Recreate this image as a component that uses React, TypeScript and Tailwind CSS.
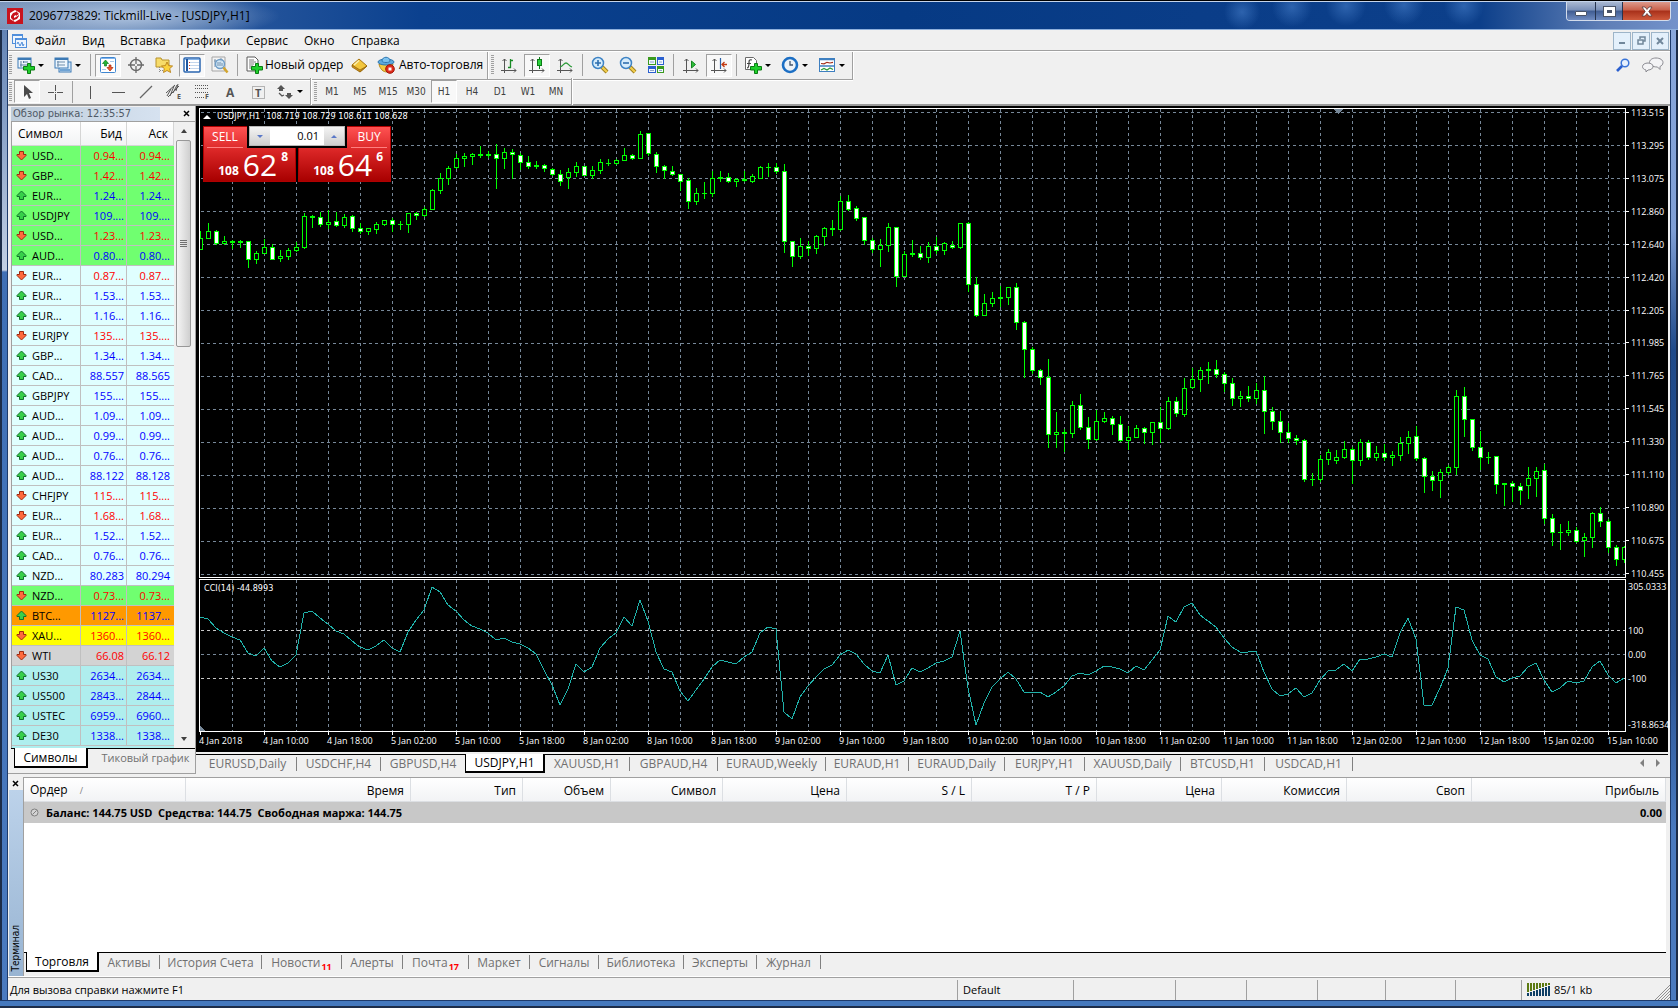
import type { ReactNode } from "react";

/* ---------- data ---------- */

type Quote = [string, string, string, "up" | "down", "green" | "cyan" | "orange" | "yellow" | "gray" | "teal"];

const quotes: Quote[] = [
  ["USD...", "0.94...", "0.94...", "down", "green"],
  ["GBP...", "1.42...", "1.42...", "down", "green"],
  ["EUR...", "1.24...", "1.24...", "up", "green"],
  ["USDJPY", "109....", "109....", "up", "green"],
  ["USD...", "1.23...", "1.23...", "down", "green"],
  ["AUD...", "0.80...", "0.80...", "up", "green"],
  ["EUR...", "0.87...", "0.87...", "down", "cyan"],
  ["EUR...", "1.53...", "1.53...", "up", "cyan"],
  ["EUR...", "1.16...", "1.16...", "up", "cyan"],
  ["EURJPY", "135....", "135....", "down", "cyan"],
  ["GBP...", "1.34...", "1.34...", "up", "cyan"],
  ["CAD...", "88.557", "88.565", "up", "cyan"],
  ["GBPJPY", "155....", "155....", "up", "cyan"],
  ["AUD...", "1.09...", "1.09...", "up", "cyan"],
  ["AUD...", "0.99...", "0.99...", "up", "cyan"],
  ["AUD...", "0.76...", "0.76...", "up", "cyan"],
  ["AUD...", "88.122", "88.128", "up", "cyan"],
  ["CHFJPY", "115....", "115....", "down", "cyan"],
  ["EUR...", "1.68...", "1.68...", "down", "cyan"],
  ["EUR...", "1.52...", "1.52...", "up", "cyan"],
  ["CAD...", "0.76...", "0.76...", "up", "cyan"],
  ["NZD...", "80.283", "80.294", "up", "cyan"],
  ["NZD...", "0.73...", "0.73...", "down", "green"],
  ["BTC...", "1127...", "1137...", "up", "orange"],
  ["XAU...", "1360...", "1360...", "down", "yellow"],
  ["WTI", "66.08", "66.12", "down", "gray"],
  ["US30", "2634...", "2634...", "up", "teal"],
  ["US500", "2843...", "2844...", "up", "teal"],
  ["USTEC", "6959...", "6960...", "up", "teal"],
  ["DE30", "1338...", "1338...", "up", "teal"],
];

const rowColor = {
  green: "bg-[#70ff70]",
  cyan: "bg-[#e0ffff]",
  orange: "bg-[#ff9900]",
  yellow: "bg-[#ffff00]",
  gray: "bg-[#d3d3d3]",
  teal: "bg-[#afeeee]",
};

/* Candles: high, body top, body bottom, low (three units per pixel), kind: w filled, h hollow, d doji. */
const candleRuns: { base: number; rows: string }[] = [
  {
    base: -27,
    rows: `393 414 450 450 h;369 393 417 417 h;390 393 432 435 w;408 423 432 435 h;420 423 429 447 d;420 423 429 444 d;423 423 480 504 w;453 459 480 492 h;417 441 462 462 h;432 441 480 480 w;450 468 477 486 h;444 450 471 480 h;426 441 453 456 h;339 348 444 447 h;345 348 354 384 d;336 351 375 381 w;330 366 375 387 h;336 363 378 381 w;342 351 378 384 h;345 348 387 396 w;369 384 396 402 w;384 384 396 405 h;366 372 390 402 h;360 360 375 378 h;354 360 375 396 w;363 372 375 390 d;339 339 375 399 h;336 339 348 360 w;321 327 348 351 h;267 270 330 330 h;219 234 273 282 h;198 204 237 255 h;162 174 204 207 h;159 168 177 201 h;159 162 171 195 h;138 162 168 174 d;153 162 168 174 d;132 162 177 267 w;144 156 177 207 h;147 156 165 237 w;159 165 189 210 w;168 186 201 207 w;183 195 201 207 d;192 195 207 216 w;204 207 225 228 w;210 222 246 258 w;204 216 234 267 h;186 198 219 231 h;198 198 228 228 w;198 210 228 237 h;177 186 213 222 h;177 189 192 198 d;177 180 192 195 h;144 165 183 183 h;162 165 177 180 w;93 102 177 177 h;99 99 162 168 w;156 162 201 219 w;195 198 213 237 w;198 213 225 228 w;222 222 246 273 w;234 240 306 327 w;264 279 306 315 h;246 279 282 297 d`,
  },
  {
    base: 33,
    rows: `153 174 222 231 h;153 171 177 186 d;159 171 186 189 w;174 177 186 201 h;153 177 183 186 d;162 168 186 189 h;138 141 177 177 h;129 141 144 171 d;129 141 156 162 w;132 153 366 399 w;363 363 411 441 w;354 378 411 417 h;363 378 387 408 w;345 348 387 402 h;321 324 351 378 h;300 324 330 348 d;228 243 330 333 h;225 243 270 273 w;258 264 297 303 w;291 291 363 375 w;354 360 390 399 w;357 375 390 441 h;309 321 378 396 h;321 321 471 501 w;393 402 471 471 h;360 399 405 411 d;378 399 414 420 w;366 378 414 429 h;351 378 393 402 w;366 369 393 405 h;363 375 384 387 w;309 309 384 387 h;306 309 495 516 w;471 492 588 591 w;522 549 588 588 h;516 534 552 561 h;498 531 537 561 d;501 501 534 555 h;489 501 609 630 w;603 606 690 774 w;681 687 753 762 w;747 750 774 795 w;717 771 945 984 w;876 936 945 984 h;927 936 942 996 d;843 855 942 954 h;822 855 924 930 w;891 921 960 987 w;870 903 960 963 h;876 894 906 909 h;888 894 915 945 w;888 912 963 966 w;918 951 963 990 h;915 924 954 954 h;921 924 939 972 w;906 906 939 975 h;861 906 927 969 w;831 843 927 930 h;831 843 882 891 w;774 804 885 891 h;744 777 804 807 h`,
  },
  {
    base: 693,
    rows: `81 90 120 156 h;66 87 93 132 d;60 87 105 114 w;96 102 132 156 w;114 129 177 198 w;153 168 177 201 h;138 168 177 186 w;129 150 177 192 h;108 150 216 282 w;201 213 246 270 w;213 243 279 309 w;249 276 297 309 w;285 294 303 315 w;297 300 420 426 w;399 417 420 438 d;345 357 420 426 h;327 336 360 375 h;330 351 363 372 h;303 327 354 357 h;321 327 363 432 w;297 306 363 378 h;300 306 354 360 w;318 339 354 363 h;312 339 354 363 w;333 345 354 378 h;291 309 348 363 h;273 291 312 342 h;258 288 357 363 w;351 354 411 459 w;393 408 423 453 w;387 396 423 474 h;375 381 399 405 h;150 168 384 405 h;141 168 240 291 w;237 237 324 333 w;273 321 354 390 w;336 351 354 372 d;348 348 435 462 w;429 429 435 498 d;423 429 441 486 w;429 438 453 495 w;381 414 438 477 h;381 393 417 471 h;372 390 537 552 w;522 534 579 618 w;552 576 579 630 d;543 570 579 588 h;561 570 606 609 w;579 591 603 651 h;516 519 594 624 h;501 519 546 561 w;537 543 624 639 w;615 621 660 678 w;618 621 660 669 h`,
  },
];

const candles = candleRuns.flatMap((run) =>
  run.rows.split(";").map((r) => {
    const [h, t, b, l, kind] = r.split(" ");
    const px = (v: string) => Math.round((Number(v) + run.base) / 3);
    return { high: px(h), top: px(t), bottom: px(b), low: px(l), kind };
  }),
);

const cci = [
  142, 147, 175, 188, 201, 209, 249, 259, 233, 272, 291, 279, 254, 130, 124, 145, 163, 183, 192, 214, 231, 241, 229, 211,
  234, 246, 187, 150, 120, 52, 67, 105, 122, 150, 167, 176, 189, 211, 203, 216, 223, 234, 251, 300, 345, 405, 358, 283,
  306, 292, 233, 208, 189, 140, 169, 91, 153, 245, 296, 307, 362, 394, 360, 327, 290, 271, 277, 281, 262, 247, 188, 171,
  178, 427, 448, 380, 347, 320, 296, 284, 254, 240, 253, 283, 303, 310, 256, 346, 333, 295, 306, 293, 278, 274, 261, 183,
  353, 464, 400, 350, 327, 306, 328, 367, 367, 367, 382, 365, 349, 317, 309, 316, 302, 289, 292, 298, 309, 289, 301, 270,
  240, 139, 156, 110, 99, 135, 152, 170, 203, 232, 247, 247, 243, 306, 358, 379, 373, 355, 380, 369, 331, 304, 300, 283,
  304, 268, 268, 262, 253, 262, 190, 145, 208, 406, 406, 354, 295, 111, 121, 210, 254, 267, 321, 337, 324, 318, 291, 280,
  330, 367, 354, 334, 340, 333, 292, 274, 315, 340, 325,
];
const cciPoints = cci.map((v, i) => `${i * 8},${Math.round(v / 3) - 10}`).join(" ");

const prices = [
  "113.515", "113.295", "113.075", "112.860", "112.640", "112.420", "112.205", "111.985", "111.765", "111.545",
  "111.330", "111.110", "110.890", "110.675", "110.455",
];

const dates = [
  "4 Jan 2018", "4 Jan 10:00", "4 Jan 18:00", "5 Jan 02:00", "5 Jan 10:00", "5 Jan 18:00", "8 Jan 02:00", "8 Jan 10:00",
  "8 Jan 18:00", "9 Jan 02:00", "9 Jan 10:00", "9 Jan 18:00", "10 Jan 02:00", "10 Jan 10:00", "10 Jan 18:00",
  "11 Jan 02:00", "11 Jan 10:00", "11 Jan 18:00", "12 Jan 02:00", "12 Jan 10:00", "12 Jan 18:00", "15 Jan 02:00",
  "15 Jan 10:00",
];

const chartTabs: [string, string][] = [
  ["EURUSD,Daily", "w-[98px]"],
  ["USDCHF,H4", "w-[84px]"],
  ["GBPUSD,H4", "w-[84px]"],
  ["USDJPY,H1", "w-[80px]"],
  ["XAUUSD,H1", "w-[85px]"],
  ["GBPAUD,H4", "w-[88px]"],
  ["EURAUD,Weekly", "w-[108px]"],
  ["EURAUD,H1", "w-[83px]"],
  ["EURAUD,Daily", "w-[96px]"],
  ["EURJPY,H1", "w-[80px]"],
  ["XAUUSD,Daily", "w-[96px]"],
  ["BTCUSD,H1", "w-[84px]"],
  ["USDCAD,H1", "w-[88px]"],
];

const terminalTabs: [string, string, string?][] = [
  ["Торговля", "w-[73px]"],
  ["Активы", "w-[61px]"],
  ["История Счета", "w-[102px]"],
  ["Новости", "w-[80px]", "11"],
  ["Алерты", "w-[61px]"],
  ["Почта", "w-[66px]", "17"],
  ["Маркет", "w-[61px]"],
  ["Сигналы", "w-[69px]"],
  ["Библиотека", "w-[85px]"],
  ["Эксперты", "w-[73px]"],
  ["Журнал", "w-[64px]"],
];

const terminalColumns: [string, string][] = [
  ["Ордер", "w-[162px]"],
  ["Время", "w-[225px]"],
  ["Тип", "w-[112px]"],
  ["Объем", "w-[88px]"],
  ["Символ", "w-[112px]"],
  ["Цена", "w-[124px]"],
  ["S / L", "w-[125px]"],
  ["T / P", "w-[125px]"],
  ["Цена", "w-[125px]"],
  ["Комиссия", "w-[125px]"],
  ["Своп", "w-[125px]"],
  ["Прибыль", "w-auto"],
];

/* ---------- icons ---------- */

function Icon({ children, size = 18 }: { children: ReactNode; size?: number }) {
  return (
    <svg width={size} height={size} viewBox="0 0 18 18" fill="none" className="shrink-0" aria-hidden="true">
      {children}
    </svg>
  );
}

const Plus = () => (
  <path d="M10.500 7.500h3v3h4v3.500h-4v3.500h-3V14h-4v-3.500h4z" fill="#1fd02c" stroke="#0a7d12" strokeWidth="1" />
);

const NewChartIcon = () => (
  <Icon>
    <rect x="1" y="2" width="13" height="10" fill="#eef6fd" stroke="#3d7ab5" />
    <path d="M1 3h13" stroke="#3d7ab5" strokeWidth="2" />
    <path d="M4 5v6M3 9h7M7 6h4M6 5l1 1-1 1" stroke="#5b7e9f" />
    <Plus />
  </Icon>
);
const ProfilesIcon = () => (
  <Icon>
    <rect x="5" y="6" width="12" height="10" fill="#d9eafa" stroke="#3d7ab5" />
    <path d="M6 14h10" stroke="#6fa3d4" strokeWidth="2" />
    <rect x="1" y="2" width="13" height="10" fill="#eef6fd" stroke="#3d7ab5" />
    <path d="M1 3h13" stroke="#3d7ab5" strokeWidth="2" />
    <path d="M4 5v6M3 6h8M3 9h8" stroke="#6e8dab" />
  </Icon>
);
const MarketWatchIcon = () => (
  <Icon>
    <rect x="1.500" y="1.500" width="15" height="15" rx="1" fill="#fff" stroke="#3f86d0" />
    <path d="M2 2.500h14" stroke="#7fb2ea" />
    <path d="M6.500 4l3 3.500h-2V10h-2V7.500h-2z" fill="#22b534" stroke="#0b7d1b" strokeWidth=".7" />
    <path d="M11 15l3-3.500h-2V9h-2v2.500H8z" fill="#f0562c" stroke="#a82a08" strokeWidth=".7" />
    <path d="M11 5.500h4M3 13.500h4" stroke="#a9c8e8" />
  </Icon>
);
const TargetIcon = () => (
  <Icon>
    <circle cx="9" cy="9" r="5.500" stroke="#6a6a6a" strokeWidth="1.400" />
    <path d="M9 1v7M9 10v7M1 9h7M10 9h7" stroke="#6a6a6a" strokeWidth="1.300" />
  </Icon>
);
const FolderStarIcon = () => (
  <Icon>
    <path d="M1 2h5l1 2h7v7H1z" fill="#f7dc6a" stroke="#b8922a" />
    <path d="M4.500 11v5M5 14.500h4" stroke="#8b8b8b" strokeDasharray="1 1" />
    <path d="M12 6l1.700 3.600 3.900.4-2.900 2.600.9 3.900-3.600-2-3.500 2 .8-3.900L6.500 10l3.900-.4z" fill="#fbd23c" stroke="#b8801a" strokeWidth=".9" />
  </Icon>
);
const TerminalIcon = () => (
  <Icon>
    <rect x="1" y="2" width="16" height="14" rx="1" fill="#fff" stroke="#2a66b0" strokeWidth="1.500" />
    <path d="M2 3.500h14" stroke="#7fb2ea" />
    <path d="M4 3v12" stroke="#1e56a0" strokeWidth="2" />
    <path d="M7 6.500h9M7 9.500h9M7 12.500h9" stroke="#c3d6ec" />
    <path d="M6 6.500h1M6 9.500h1M6 12.500h1" stroke="#d0402b" />
  </Icon>
);
const TesterIcon = () => (
  <Icon>
    <path d="M1 1h13v14H1z" fill="#f4f4f4" stroke="#a5a5a5" />
    <path d="M4 3v8M3 5h3M10 2v5M9 4h3" stroke="#7a93ab" />
    <circle cx="9" cy="8" r="4.500" fill="#cfe6f7" fillOpacity=".85" stroke="#6f9dc7" strokeWidth="1.400" />
    <path d="M7 6v4M9 6v4M11 7v3" stroke="#6e8dab" />
    <path d="M12.500 11.500l4 5" stroke="#d2a530" strokeWidth="2.600" />
  </Icon>
);
const NewOrderIcon = () => (
  <Icon>
    <path d="M2 1h8l3 3v11H2z" fill="#fff" stroke="#5a5a5a" />
    <path d="M4 4h5M4 6h7M4 8h5M4 10h4M4 12h2" stroke="#7d7d7d" />
    <Plus />
  </Icon>
);
const BookIcon = () => (
  <Icon>
    <path d="M2 9l7-6 8 7-7 6z" fill="#f2c63d" stroke="#a87510" />
    <path d="M2 9l8 5 7-4-7 6-8-5z" fill="#c98f1c" stroke="#8f610c" strokeWidth=".7" />
    <path d="M4 9l5-4.500" stroke="#fdf0b0" strokeWidth="1.500" />
  </Icon>
);
const AutoTradeIcon = () => (
  <Icon>
    <path d="M2 8c1 5 4 8 8 8 3 0 5-3 6-8z" fill="#f3ca3e" stroke="#b88a1b" />
    <ellipse cx="9" cy="6" rx="8" ry="3" fill="#5ea9dc" stroke="#2f77b0" />
    <path d="M5 5c0-5 8-5 8 0 0 2-8 2-8 0z" fill="#7cc2ee" stroke="#2f77b0" />
    <circle cx="13" cy="13" r="4.300" fill="#e02d1b" stroke="#9f1408" />
    <rect x="11.500" y="11.500" width="3" height="3" fill="#fff" />
  </Icon>
);
const Axes = () => (
  <path d="M4.500 3v14M1 14.500h15M2.500 5l2-2 2 2M14 12.500l2 2-2 2" stroke="#555" />
);
const BarsIcon = () => (
  <Icon>
    <Axes />
    <path d="M10.500 3v9M10 4.500h3M8 11.500h3" stroke="#188a24" strokeWidth="1.300" />
  </Icon>
);
const CandlesIcon = () => (
  <Icon>
    <Axes />
    <path d="M11.500 1v12" stroke="#0c7a17" />
    <rect x="9.500" y="3.500" width="4" height="6" fill="#2bd13b" stroke="#0c7a17" />
  </Icon>
);
const LineIcon = () => (
  <Icon>
    <Axes />
    <path d="M4 11c3-1 4-4 6-4s3 3 6 4" stroke="#2d9b39" strokeWidth="1.300" />
  </Icon>
);
const ZoomIcon = ({ plus }: { plus: boolean }) => (
  <Icon>
    <path d="M11 11l5 5" stroke="#9a7a1a" strokeWidth="4" />
    <path d="M11 11l5 5" stroke="#f0cc4c" strokeWidth="2.400" />
    <circle cx="7" cy="7" r="5.500" fill="#d6ecfb" stroke="#3e83c4" strokeWidth="1.500" />
    <path d={plus ? "M4 7h6M7 4v6" : "M4 7h6"} stroke="#2f6fae" strokeWidth="1.600" />
  </Icon>
);
const TilesIcon = () => (
  <Icon>
    <path d="M1 1h8v8H1zM10 10h7v7h-7z" fill="#3a9a1e" />
    <path d="M10 1h7v8h-7zM1 10h8v7H1z" fill="#2a5fcf" />
    <path d="M2 4h6v4H2zM11 4h5v4h-5zM2 13h6v3H2zM11 13h5v3h-5z" fill="#f4f8ff" />
    <path d="M3 6h4M12 6h3M3 14.500h4M12 14.500h3" stroke="#8fa6c8" />
  </Icon>
);
const AutoScrollIcon = () => (
  <Icon>
    <Axes />
    <path d="M9.500 5l4 3.500-4 3.500z" fill="#2fbf3c" stroke="#148520" />
  </Icon>
);
const ShiftIcon = () => (
  <Icon>
    <Axes />
    <path d="M10.500 2v11" stroke="#2b62a8" strokeWidth="1.200" />
    <path d="M17 8.500h-5M14.500 6l-2.500 2.500 2.500 2.500" stroke="#c23a12" strokeWidth="1.300" />
  </Icon>
);
const IndicatorIcon = () => (
  <Icon>
    <path d="M1.500 1.500h8l3 3v9h-11z" fill="#fff" stroke="#6a6a6a" />
    <path d="M8 4c-3-1-3 1-3 3s0 5-2 5M3 7.500h4" stroke="#444" strokeWidth="1.200" />
    <Plus />
  </Icon>
);
const ClockIcon = () => (
  <Icon>
    <circle cx="9" cy="9" r="7" fill="#eef3f8" stroke="#1c6fc4" strokeWidth="2.600" />
    <path d="M9 5v4h3" stroke="#45566b" strokeWidth="1.300" />
  </Icon>
);
const TemplateIcon = () => (
  <Icon>
    <rect x="1.500" y="2.500" width="15" height="13" fill="#fff" stroke="#3e7fc0" />
    <path d="M1 3.500h16M1 10h16" stroke="#3e7fc0" strokeWidth="1.500" />
    <path d="M3 7.500l3 .3 3-1.500 3 .7 3-.7" stroke="#a3301c" strokeWidth="1.200" />
    <path d="M3 14l3-1.500 3 1.500 3-2 3 1.500" stroke="#2d9b39" strokeWidth="1.200" />
  </Icon>
);
const CursorIcon = () => (
  <Icon>
    <path d="M6 2v12l3-3 2 5 2-1-2-5h4z" fill="#4a4a4a" />
  </Icon>
);
const CrossIcon = () => (
  <Icon>
    <path d="M9.500 2v6M9.500 11v6M2 9.500h6M11 9.500h6M9 9.500h1" stroke="#555" />
  </Icon>
);
const VLineIcon = () => (
  <Icon>
    <path d="M9.500 3v13" stroke="#555" />
  </Icon>
);
const HLineIcon = () => (
  <Icon>
    <path d="M3 9.500h13" stroke="#555" />
  </Icon>
);
const TrendIcon = () => (
  <Icon>
    <path d="M3 15L15 3" stroke="#666" strokeWidth="1.200" />
  </Icon>
);
const ChannelIcon = () => (
  <Icon>
    <path d="M1 10L10 2M3 14L14 3M2 13l4-7M5 13l4-10M8 10l4-8M11 8l2-7" stroke="#555" />
    <text x="12" y="16" fontSize="7" fontWeight="700" fill="#555" fontFamily="Open Sans, sans-serif">E</text>
  </Icon>
);
const FiboIcon = () => (
  <Icon>
    <path d="M2 2.500h14M2 5.500h14M2 9.500h14M2 14.500h9" stroke="#555" strokeDasharray="1 1" />
    <text x="12" y="16" fontSize="7" fontWeight="700" fill="#555" fontFamily="Open Sans, sans-serif">F</text>
  </Icon>
);
const TextIcon = () => (
  <Icon>
    <text x="5" y="14" fontSize="12" fontWeight="700" fill="#555" fontFamily="Open Sans, sans-serif">A</text>
  </Icon>
);
const LabelIcon = () => (
  <Icon>
    <rect x="3.500" y="3.500" width="12" height="12" stroke="#777" strokeDasharray="1 1" />
    <text x="6" y="14" fontSize="11" fontWeight="700" fill="#555" fontFamily="Open Sans, sans-serif">T</text>
  </Icon>
);
const ShapesIcon = () => (
  <Icon>
    <path d="M5 2l4 4H7v2H3V6H1zM13 16l-4-4h2v-2h4v2h2z" fill="#555" />
    <path d="M3 10l3 3 2-1" stroke="#555" strokeWidth="1.300" />
  </Icon>
);
const ArrowMark = ({ dir }: { dir: "up" | "down" }) => (
  <svg width="11" height="11" viewBox="0 0 11 11" aria-hidden="true" className="shrink-0">
    {dir === "up" ? (
      <path d="M5.500 1L10 5.500v1H7.500v3h-4v-3H1v-1z" fill="#37cf4a" stroke="#11702a" />
    ) : (
      <path d="M5.500 10L1 5.500v-1h2.500v-3h4v3H10v1z" fill="#ff6a3c" stroke="#9c2a10" />
    )}
  </svg>
);

/* ---------- toolbar pieces ---------- */

function Grip() {
  return (
    <span className="flex h-5 w-[5px] shrink-0 justify-center">
      <span className="w-[3px] bg-[repeating-linear-gradient(to_bottom,#a0a0a0_0,#a0a0a0_1px,#f0f0f0_1px,#f0f0f0_2px)]" />
    </span>
  );
}

function Sep() {
  return (
    <span className="flex h-[22px] w-[7px] shrink-0 justify-center">
      <span className="w-px bg-[#a0a0a0]" />
    </span>
  );
}

function Tool({ label, pressed, children }: { label: string; pressed?: boolean; children: ReactNode }) {
  return (
    <button type="button" aria-label={label} className="flex w-7 shrink-0 items-center justify-center">
      <span
        className={
          pressed
            ? "flex h-[23px] w-[26px] items-center justify-center border border-b-white border-r-white border-l-[#a0a0a0] border-t-[#a0a0a0] bg-[#f8f8f8]"
            : "flex h-[23px] w-[26px] items-center justify-center"
        }
      >
        {children}
      </span>
    </button>
  );
}

function DropTool({ label, children }: { label: string; children: ReactNode }) {
  return (
    <button type="button" aria-label={label} className="flex w-[37px] shrink-0 items-center gap-[3px] pl-1">
      {children}
      <span className="border-x-[3px] border-t-[3px] border-x-transparent border-t-black" />
    </button>
  );
}

function TitleBar() {
  return (
    <header className="flex h-[29px] shrink-0 items-start justify-between border-b border-t border-b-[#8fb0dc] border-t-[#c5d4ea] bg-[radial-gradient(ellipse_150px_24px_at_130px_14px,rgba(190,208,232,0.85),transparent),radial-gradient(circle_at_1242px_10px,rgba(60,115,190,0.7)_0,transparent_18px),radial-gradient(circle_at_1292px_5px,rgba(60,115,190,0.7)_0,transparent_20px),radial-gradient(circle_at_1346px_4px,rgba(60,115,190,0.7)_0,transparent_20px),radial-gradient(circle_at_1404px_3px,rgba(60,115,190,0.7)_0,transparent_20px),radial-gradient(circle_at_1464px_4px,rgba(60,115,190,0.7)_0,transparent_20px),linear-gradient(to_right,#7a94ba_0,#6283b2_120px,#23539a_260px,#0b418f_420px,#063a84_900px,#0a3d88_1200px,#0c3f8a_1480px,#5d7db5_1600px,#7493cb_100%)] px-[7px]">
      <div className="flex h-7 items-center gap-[6px]">
        <svg width="16" height="16" viewBox="0 0 16 16" aria-hidden="true">
          <rect width="16" height="16" fill="#c8141e" />
          <path d="M3 5l5-3 5 3v6l-5 3-5-3z" fill="#fff" />
          <path d="M4 8l2-3 3-1 0-1 3 3-3 2 0-1-2 1v2l2-1 3-2v1l-2 3-3 1v1l-3-3z" fill="#c8141e" />
        </svg>
        <h1 className="text-[12px] leading-4 text-black">2096773829: Tickmill-Live - [USDJPY,H1]</h1>
      </div>
      <div className="flex h-[19px] overflow-hidden rounded-b-[4px] border border-t-0 border-[#d3dceb]">
        <button type="button" aria-label="Свернуть" className="flex w-[29px] items-center justify-center border-r border-[#26344f] bg-[linear-gradient(to_bottom,#a9b8d2,#7a90b8_45%,#3f5c92_50%,#6f8bc0)]">
          <span className="mt-1 h-[5px] w-3 rounded-[1px] border border-[#4a5468] bg-white" />
        </button>
        <button type="button" aria-label="Развернуть" className="flex w-[27px] items-center justify-center border-r border-[#26344f] bg-[linear-gradient(to_bottom,#a9b8d2,#7a90b8_45%,#3f5c92_50%,#6f8bc0)]">
          <span className="h-[9px] w-[11px] border-[3px] border-white bg-[#4a5468] outline outline-1 outline-[#4a5468]" />
        </button>
        <button type="button" aria-label="Закрыть" className="flex w-[47px] items-center justify-center bg-[linear-gradient(to_bottom,#dd9a8c,#c9604a_45%,#a8301a_50%,#cf5a3c)]">
          <svg width="12" height="11" viewBox="0 0 12 11">
            <path d="M1 1l3 0 2 2.500L8 1h3L7.800 5.500 11 10H8L6 7.500 4 10H1l3.200-4.500z" fill="#fff" stroke="#5b3b3b" strokeWidth=".8" />
          </svg>
        </button>
      </div>
    </header>
  );
}

function MenuBar() {
  const mdi = "flex h-[18px] w-[18px] items-center justify-center border border-[#9db4c8] bg-[#e4f0fb]";
  return (
    <nav className="flex h-[22px] shrink-0 items-center justify-between border-b border-white pr-[1px] shadow-[inset_0_-1px_0_#a0a0a0]">
      <div className="flex items-center pl-1 text-[12px] leading-4">
        <svg width="16" height="16" viewBox="0 0 16 16" fill="none" aria-hidden="true" className="mr-[7px]">
          <rect x="0.500" y="1.500" width="10" height="9" fill="#eef5fd" stroke="#4f8edb" />
          <rect x="3.500" y="5.500" width="11" height="9" fill="#eef5fd" stroke="#4f8edb" />
          <path d="M3 6h12M0 2h11" stroke="#4f8edb" strokeWidth="2" />
          <path d="M5 11l1-2 2 4 2-4 1 4 1-2" stroke="#4f8edb" />
        </svg>
        <a href="#file" className="w-[47px]">Файл</a>
        <a href="#view" className="w-[38px]">Вид</a>
        <a href="#insert" className="w-[60px]">Вставка</a>
        <a href="#charts" className="w-[66px]">Графики</a>
        <a href="#tools" className="w-[58px]">Сервис</a>
        <a href="#window" className="w-[47px]">Окно</a>
        <a href="#help">Справка</a>
      </div>
      <div className="flex gap-px">
        <button type="button" aria-label="Свернуть график" className={mdi}>
          <span className="mt-1 h-[2px] w-[6px] bg-[#71879b]" />
        </button>
        <button type="button" aria-label="Восстановить график" className={mdi}>
          <svg width="9" height="9" viewBox="0 0 9 9" fill="none">
            <path d="M3 3V1h5v4H6" stroke="#71879b" strokeWidth="1.500" />
            <path d="M1 4h5v4H1z" stroke="#71879b" strokeWidth="1.500" />
          </svg>
        </button>
        <button type="button" aria-label="Закрыть график" className={mdi}>
          <svg width="8" height="8" viewBox="0 0 8 8">
            <path d="M1 1l6 6M7 1L1 7" stroke="#71879b" strokeWidth="2" />
          </svg>
        </button>
      </div>
    </nav>
  );
}

const groupEdge = "flex h-[27px] items-center border-r border-[#a0a0a0] pr-px shadow-[1px_0_0_#fff]";

function Toolbars() {
  return (
    <>
      <div className="flex h-[27px] shrink-0 items-center justify-between">
        <div className="flex border-b border-[#a0a0a0] shadow-[0_1px_0_#fff]">
          <div className={groupEdge}>
            <Grip />
            <DropTool label="Новый график"><NewChartIcon /></DropTool>
            <DropTool label="Профили"><ProfilesIcon /></DropTool>
            <Sep />
            <Tool label="Обзор рынка" pressed><MarketWatchIcon /></Tool>
            <Tool label="Окно данных"><TargetIcon /></Tool>
            <Tool label="Навигатор"><FolderStarIcon /></Tool>
            <Tool label="Терминал" pressed><TerminalIcon /></Tool>
            <Tool label="Тестер стратегий"><TesterIcon /></Tool>
            <Sep />
            <button type="button" className="flex w-[104px] items-center gap-[2px] pl-1 text-[12px] leading-4">
              <NewOrderIcon />
              <span className="whitespace-nowrap">Новый ордер</span>
            </button>
            <Tool label="MetaEditor"><BookIcon /></Tool>
            <button type="button" className="flex w-[113px] items-center gap-[4px] pl-1 text-[12px] leading-4">
              <AutoTradeIcon />
              <span className="whitespace-nowrap">Авто-торговля</span>
            </button>
          </div>
          <div className={`${groupEdge} pl-[2px]`}>
            <Grip />
            <Tool label="Бары"><BarsIcon /></Tool>
            <Tool label="Свечи" pressed><CandlesIcon /></Tool>
            <Tool label="Линия"><LineIcon /></Tool>
            <Sep />
            <Tool label="Увеличить"><ZoomIcon plus /></Tool>
            <Tool label="Уменьшить"><ZoomIcon plus={false} /></Tool>
            <Tool label="Окна рядом"><TilesIcon /></Tool>
            <Sep />
            <Tool label="Автопрокрутка"><AutoScrollIcon /></Tool>
            <Tool label="Сдвиг графика" pressed><ShiftIcon /></Tool>
            <Sep />
            <DropTool label="Индикаторы"><IndicatorIcon /></DropTool>
            <DropTool label="Периоды"><ClockIcon /></DropTool>
            <DropTool label="Шаблоны"><TemplateIcon /></DropTool>
          </div>
        </div>
        <div className="flex items-center gap-3 pb-[2px] pr-[6px]">
          <button type="button" aria-label="Поиск">
            <svg width="14" height="14" viewBox="0 0 14 14" fill="none">
              <circle cx="9" cy="5" r="3.800" fill="#e6f0fd" stroke="#3a74d8" strokeWidth="1.500" />
              <path d="M6 8l-5 5" stroke="#2a5fcf" strokeWidth="2.600" />
            </svg>
          </button>
          <button type="button" aria-label="Чат">
            <svg width="22" height="16" viewBox="0 0 22 16" fill="none">
              <path d="M14 1c4 0 7 2 7 4.500S19 9 18 9.500l0 3-2.500-2.500c-5 0-8-2-8-4.500S10 1 14 1z" fill="#f4f4f6" stroke="#8a8a90" />
              <path d="M6 6c3 0 5 1.500 5 3.500s-2 3.500-5 3.500l-2 2v-2c-2-.5-3.500-1.500-3.500-3.500S3 6 6 6z" fill="#f4f4f6" stroke="#8a8a90" />
            </svg>
          </button>
        </div>
      </div>
      <div className="flex h-[27px] shrink-0 items-center border-b-2 border-[#9a9a9a]">
        <div className={groupEdge}>
          <Grip />
          <Tool label="Курсор" pressed><CursorIcon /></Tool>
          <Tool label="Перекрестие"><CrossIcon /></Tool>
          <Sep />
          <Tool label="Вертикальная линия"><VLineIcon /></Tool>
          <Tool label="Горизонтальная линия"><HLineIcon /></Tool>
          <Tool label="Трендовая линия"><TrendIcon /></Tool>
          <Tool label="Канал"><ChannelIcon /></Tool>
          <Tool label="Фибоначчи"><FiboIcon /></Tool>
          <Tool label="Текст"><TextIcon /></Tool>
          <Tool label="Метка"><LabelIcon /></Tool>
          <DropTool label="Стрелки"><ShapesIcon /></DropTool>
        </div>
        <div className={`${groupEdge} pl-[2px]`}>
          <Grip />
          {["M1", "M5", "M15", "M30", "H1", "H4", "D1", "W1", "MN"].map((p) => (
            <Tool key={p} label={p} pressed={p === "H1"}>
              <span className="font-['DejaVu_Sans_Condensed','DejaVu_Sans',sans-serif] text-[10px] leading-4 text-[#404040]">{p}</span>
            </Tool>
          ))}
        </div>
      </div>
    </>
  );
}

/* ---------- market watch ---------- */

function MarketWatch() {
  const th = "h-6 border-b border-r border-[#d5d5d5] bg-gradient-to-b from-white to-[#f2f3f5] pl-[6px] font-normal";
  return (
    <aside className="flex w-[188px] shrink-0 flex-col border-b border-r border-[#a0a0a0] pl-[3px]">
      <div className="flex h-[15px] items-center justify-between pr-[5px]">
        <span className="w-[149px] bg-gradient-to-r from-[#bfcddb] to-[#d6e2f0] pl-[2px] font-['DejaVu_Sans_Condensed','DejaVu_Sans',sans-serif] text-[11px] leading-[14px] text-[#505a66]">
          Обзор рынка: 12:35:57
        </span>
        <button type="button" aria-label="Закрыть обзор рынка">
          <svg width="7" height="7" viewBox="0 0 7 7"><path d="M1 1l5 5M6 1L1 6" stroke="#000" strokeWidth="1.500" /></svg>
        </button>
      </div>
      <div className="flex h-[627px] overflow-hidden border-l border-t border-[#a0a0a0] bg-white">
        <div className="w-[162px] shrink-0">
          <table className="w-full table-fixed border-separate border-spacing-0 text-[11px] leading-4">
            <thead>
              <tr className="text-[12px]">
                <th className={`${th} w-[69px] text-left`}>Символ</th>
                <th className={`${th} w-[46px] pr-1 text-right`}>Бид</th>
                <th className={`${th} pr-[5px] text-right`}>Аск</th>
              </tr>
            </thead>
            <tbody>
              {quotes.map(([name, bid, ask, dir, color], i) => {
                const num = dir === "up" ? "text-[#0000ff]" : "text-[#ff0000]";
                return (
                  <tr key={i} className={rowColor[color]}>
                    <td className="h-5 border-b border-r border-[#c0c0c0] p-0 pl-1">
                      <span className="flex items-center gap-[5px]">
                        <ArrowMark dir={dir} />
                        <span>{name}</span>
                      </span>
                    </td>
                    <td className={`h-5 border-b border-r border-[#c0c0c0] p-0 pr-[2px] text-right ${num}`}>{bid}</td>
                    <td className={`h-5 border-b border-[#c0c0c0] p-0 pr-1 text-right ${num}`}>{ask}</td>
                  </tr>
                );
              })}
              <tr className="bg-[#afeeee]"><td colSpan={3} className="h-5" /></tr>
            </tbody>
          </table>
        </div>
        <div className="flex flex-1 flex-col items-center bg-[#f0f0f0] pr-[2px]">
          <span className="flex h-[18px] items-center"><span className="border-x-[3px] border-b-[4px] border-x-transparent border-b-[#404040]" /></span>
          <span className="flex h-[207px] w-[15px] flex-col items-center justify-center gap-px rounded-[2px] border border-[#989898] bg-gradient-to-r from-[#f5f5f5] to-[#cfcfcf]">
            <span className="h-px w-[7px] bg-[#707070]" />
            <span className="h-px w-[7px] bg-[#707070]" />
            <span className="h-px w-[7px] bg-[#707070]" />
            <span className="h-px w-[7px] bg-[#707070]" />
          </span>
          <span className="flex-1" />
          <span className="flex h-[18px] items-center"><span className="border-x-[3px] border-t-[4px] border-x-transparent border-t-[#404040]" /></span>
        </div>
      </div>
      <div className="flex h-5 items-start border-t border-black text-[12px] leading-[17px]">
        <button type="button" className="-mt-px ml-[3px] h-5 w-[74px] border border-b-2 border-r-2 border-t-0 border-black bg-white">Символы</button>
        <button type="button" className="flex-1 whitespace-nowrap pl-2 text-center text-[11px] text-[#707070]">Тиковый график</button>
      </div>
    </aside>
  );
}

/* ---------- chart ---------- */

function OneClick() {
  const btn =
    "flex h-14 w-[93px] flex-col border border-[#b00000] bg-[linear-gradient(to_bottom,#ff5252,#d92525_45%,#a80000)] text-white";
  const spin = "flex w-5 items-center justify-center bg-gradient-to-b from-[#f4f4f4] to-[#cfcfcf]";
  const quote = "flex w-full flex-1 items-end justify-end gap-1 pr-[7px]";
  return (
    <div className="absolute left-[3px] top-[17px] bg-black">
      <div className="relative flex gap-[2px]">
        <button type="button" className={btn}>
          <span className="mx-[3px] w-9 border-b border-[#ff8080] text-center text-[12px] leading-5">SELL</span>
          <span className={quote}>
            <b className="pb-[2px] text-[12px] leading-4">108</b>
            <span className="text-[30px] leading-8">62</span>
            <b className="self-start pt-[1px] text-[12px] leading-4">8</b>
          </span>
        </button>
        <button type="button" className={btn}>
          <span className="mx-[3px] w-9 self-end border-b border-[#ff8080] text-center text-[12px] leading-5">BUY</span>
          <span className={quote}>
            <b className="pb-[2px] text-[12px] leading-4">108</b>
            <span className="text-[30px] leading-8">64</span>
            <b className="self-start pt-[1px] text-[12px] leading-4">6</b>
          </span>
        </button>
        <div className="absolute left-[44px] top-0 flex h-[22px] w-[100px] bg-black px-[2px] pb-[2px]">
          <div className="flex w-full border border-[#b8b8b8]">
            <button type="button" aria-label="Уменьшить объем" className={spin}>
              <span className="border-x-[3px] border-t-[3px] border-x-transparent border-t-[#5a78c8]" />
            </button>
            <input aria-label="Объем" defaultValue="0.01" className="w-0 flex-1 bg-white pr-[5px] text-right text-[11px] leading-4 text-black outline-none" />
            <button type="button" aria-label="Увеличить объем" className={spin}>
              <span className="border-x-[3px] border-b-[3px] border-x-transparent border-b-[#5a78c8]" />
            </button>
          </div>
        </div>
      </div>
    </div>
  );
}

const verticals = Array.from({ length: 44 }, (_, i) => (i + 1) * 32);

function VerticalGrid() {
  return (
    <>
      {verticals.map((x) => (
        <line key={x} x1={x + 0.5} x2={x + 0.5} y1="0" y2="100%" stroke="#778899" strokeDasharray="3 3" />
      ))}
    </>
  );
}

function Chart() {
  return (
    <div className="flex flex-col bg-black pl-[3px] pt-[2px] text-[9px] leading-[9px] text-white">
      <div className="flex h-[470px]">
        <div className="relative min-w-0 flex-1 overflow-hidden border border-white">
          <svg className="block h-full w-full" shapeRendering="crispEdges" aria-label="USDJPY H1">
            <VerticalGrid />
            {prices.map((_, i) => (
              <line key={i} x1="1" x2="100%" y1={3.5 + i * 33} y2={3.5 + i * 33} stroke="#778899" strokeDasharray="3 3" />
            ))}
            {candles.map((c, i) => (
              <g key={i}>
                <rect x={i * 8} y={c.high} width="1" height={Math.max(1, c.low - c.high)} fill="#00ff00" />
                <rect x={i * 8 - 2} y={c.top} width="5" height={Math.max(1, c.bottom - c.top)} fill="#00ff00" />
                {c.kind !== "d" && (
                  <rect
                    x={i * 8 - 1}
                    y={c.top + 1}
                    width="3"
                    height={Math.max(0, c.bottom - c.top - 2)}
                    fill={c.kind === "w" ? "#ffffff" : "#000000"}
                  />
                )}
              </g>
            ))}
            <path d="M1134 0h9l-4 5h-1z" fill="#778899" />
          </svg>
          <div className="absolute left-[3px] top-[3px] flex items-center gap-[6px] font-['DejaVu_Sans_Condensed','DejaVu_Sans',sans-serif]">
            <span className="border-x-4 border-b-4 border-x-transparent border-b-white" />
            <span>USDJPY,H1</span>
            <span>108.719 108.729 108.611 108.628</span>
          </div>
          <OneClick />
        </div>
        <div className="flex w-[42px] shrink-0 flex-col justify-between">
          {prices.map((p) => (
            <span key={p} className="flex items-center gap-[2px]">
              <span className="h-px w-[3px] bg-white" />
              {p}
            </span>
          ))}
        </div>
      </div>
      <div className="mt-px flex h-[153px]">
        <div className="relative min-w-0 flex-1 overflow-hidden border border-white">
          <svg className="block h-full w-full" shapeRendering="crispEdges" aria-label="CCI">
            <VerticalGrid />
            <line x1="1" x2="100%" y1="50.500" y2="50.500" stroke="#c8c8c8" strokeDasharray="3 3" />
            <line x1="1" x2="100%" y1="74.500" y2="74.500" stroke="#778899" strokeDasharray="3 3" />
            <line x1="1" x2="100%" y1="98.500" y2="98.500" stroke="#c8c8c8" strokeDasharray="3 3" />
            <polyline points={cciPoints} fill="none" stroke="#20b2aa" />
            <path d="M0 146v5h5z" fill="#778899" />
          </svg>
          <span className="absolute left-1 top-1 font-['DejaVu_Sans_Condensed','DejaVu_Sans',sans-serif]">CCI(14) -44.8993</span>
        </div>
        <div className="flex w-[42px] shrink-0 flex-col pl-[2px] pt-[3px]">
          <span>305.0333</span>
          <span className="mt-[35px]">100</span>
          <span className="mt-[15px]">0.00</span>
          <span className="mt-[15px]">-100</span>
          <span className="mt-[37px] whitespace-nowrap">-318.8634</span>
        </div>
      </div>
      <div className="flex h-5 overflow-hidden">
        {dates.map((d) => (
          <span key={d} className="w-16 shrink-0 whitespace-nowrap">
            <span className="ml-[1px] block h-[3px] w-px bg-white" />
            <span className="mt-px block">{d}</span>
          </span>
        ))}
      </div>
    </div>
  );
}

function ChartTabs() {
  return (
    <div className="mt-[2px] flex h-[20px] items-start border-t border-black bg-[#f0f0f0] pl-[3px] text-[12px] leading-[17px] text-[#707070]">
      {chartTabs.map(([name, width], i) => (
        <button
          key={name + i}
          type="button"
          className={
            i === 3
              ? `${width} -mt-px h-[19px] shrink-0 border border-b-2 border-r-2 border-t-0 border-black bg-white text-black`
              : `${width} flex h-[17px] shrink-0 items-center`
          }
        >
          <span className="flex-1 text-center">{name}</span>
          {i !== 3 && i !== 2 && <span className="h-[14px] w-px bg-[#808080]" />}
        </button>
      ))}
      <span className="flex-1" />
      <span className="flex h-4 items-center gap-3 pr-2">
        <button type="button" aria-label="Назад" className="border-y-4 border-r-4 border-y-transparent border-r-[#808080]" />
        <button type="button" aria-label="Вперед" className="border-y-4 border-l-4 border-y-transparent border-l-[#808080]" />
      </span>
    </div>
  );
}

/* ---------- terminal ---------- */

function Terminal() {
  return (
    <section className="mt-[3px] flex min-h-[196px] flex-1">
      <div className="flex w-[15px] shrink-0 flex-col items-center">
        <button type="button" aria-label="Закрыть терминал" className="flex h-[13px] items-center">
          <svg width="7" height="7" viewBox="0 0 7 7"><path d="M1 1l5 5M6 1L1 6" stroke="#000" strokeWidth="1.500" /></svg>
        </button>
        <div className="flex w-[14px] flex-1 items-center bg-gradient-to-b from-[#bcd2ea] to-[#98b4d2]">
          <span className="mt-auto rotate-180 pt-1 font-['DejaVu_Sans_Condensed','DejaVu_Sans',sans-serif] text-[10px] leading-[14px] [writing-mode:vertical-rl]">Терминал</span>
        </div>
      </div>
      <div className="flex min-w-0 flex-1 flex-col border-l border-t border-[#a0a0a0]">
        <div className="mr-1 flex-1 bg-white">
          <table className="w-full table-fixed border-separate border-spacing-0 text-[12px] leading-4">
            <thead>
              <tr>
                {terminalColumns.map(([name, width], i) => (
                  <th
                    key={i}
                    className={`${width} h-6 border-b border-r border-[#dcdfe3] bg-gradient-to-b from-white to-[#f2f3f5] px-[6px] pt-[2px] font-normal ${i === 0 ? "text-left" : "text-right"}`}
                  >
                    {name}
                    {i === 0 && <span className="ml-3 text-[9px] text-[#808080]">/</span>}
                  </th>
                ))}
              </tr>
            </thead>
            <tbody>
              <tr className="bg-[#c8c8c8] font-bold">
                <td colSpan={11} className="h-[21px] p-0 pl-[6px] text-[11px]">
                  <span className="flex items-center gap-[7px] whitespace-pre">
                    <svg width="9" height="9" viewBox="0 0 9 9" fill="none" aria-hidden="true">
                      <circle cx="4.500" cy="4.500" r="3.500" fill="#d4d4d4" stroke="#808080" />
                      <path d="M2.500 6.500l4-4" stroke="#808080" />
                    </svg>
                    {"Баланс: 144.75 USD  Средства: 144.75  Свободная маржа: 144.75"}
                  </span>
                </td>
                <td className="h-[21px] p-0 pr-1 text-right text-[11px]">0.00</td>
              </tr>
            </tbody>
          </table>
        </div>
        <div className="mr-1 flex h-6 items-start border-t border-black pl-[2px] text-[12px] leading-[17px] text-[#707070]">
          {terminalTabs.map(([name, width, badge], i) => (
            <button
              key={name}
              type="button"
              className={
                i === 0
                  ? `${width} -mt-px h-5 shrink-0 border border-b-2 border-r-2 border-t-0 border-black bg-white text-black`
                  : `${width} flex h-[18px] shrink-0 items-center whitespace-nowrap`
              }
            >
              {i === 0 ? (
                name
              ) : (
                <>
                  <span className="flex flex-1 items-end justify-center gap-px">
                    {name}
                    {badge && <b className="text-[9px] leading-[9px] text-[#ff0000]">{badge}</b>}
                  </span>
                  <span className="h-[14px] w-px bg-[#808080]" />
                </>
              )}
            </button>
          ))}
        </div>
      </div>
    </section>
  );
}

function StatusBar() {
  const cell = "flex h-5 shrink-0 items-center border-l border-[#a0a0a0] pl-[5px]";
  return (
    <footer className="flex h-6 shrink-0 items-center border-t border-white pt-[2px] text-[11px] leading-4 shadow-[inset_0_1px_0_#a0a0a0]">
      <span className="flex-1 pl-[2px]">Для вызова справки нажмите F1</span>
      <span className={`${cell} w-[116px]`}>Default</span>
      <span className={`${cell} w-[102px]`} />
      <span className={`${cell} w-[71px]`} />
      <span className={`${cell} w-[71px]`} />
      <span className={`${cell} w-[68px]`} />
      <span className={`${cell} w-[70px]`} />
      <span className={`${cell} w-[66px]`} />
      <span className={`${cell} w-[149px] justify-between`}>
        <span className="flex items-center gap-1">
          <svg width="23" height="13" viewBox="0 0 23 13" shapeRendering="crispEdges" aria-hidden="true">
            {[0, 1, 2, 3, 4, 5, 6, 7].map((i) => (
              <g key={i}>
                <rect x={i * 3} y="0" width="2" height={9 - i} fill="#5c7a12" />
                <rect x={i * 3} y={10 - i} width="2" height={3 + i} fill="#0e3f66" />
              </g>
            ))}
          </svg>
          85/1 kb
        </span>
        <svg width="15" height="15" viewBox="0 0 15 15" className="self-end" aria-hidden="true">
          <path d="M0 15L15 0M3 15L15 3M6 15L15 6M9 15L15 9M12 15L15 12" stroke="#909090" />
        </svg>
      </span>
    </footer>
  );
}

export default function App() {
  return (
    <div className="flex min-h-screen flex-col overflow-hidden border-t border-black bg-[#4a7abf] font-['Open_Sans','Noto_Sans',sans-serif] text-black">
      <TitleBar />
      <div className="flex flex-1">
        <div className="w-2 shrink-0 border-l-2 border-r border-l-[#1c2c48] border-r-[#1d3a6b] bg-[linear-gradient(to_bottom,#6283b5_0,#c3d0e4_240px,#3f6fb5_242px,#4a7abf_100%)]" />
        <main className="flex min-w-0 flex-1 flex-col bg-[#f0f0f0]">
          <MenuBar />
          <Toolbars />
          <div className="flex shrink-0">
            <MarketWatch />
            <div className="min-w-0 flex-1 pr-[2px]">
              <Chart />
              <ChartTabs />
            </div>
          </div>
          <Terminal />
          <StatusBar />
        </main>
        <div className="w-2 shrink-0 border-l border-r-2 border-l-[#1d3a6b] border-r-[#1c2c48] bg-[linear-gradient(to_bottom,#8aa8dc_0,#7f9fd6_200px,#1f4a8a_320px,#2a5597_640px,#4a7abf_800px)]" />
      </div>
      <div className="h-2 shrink-0 border-b-2 border-t border-b-[#1c2c48] border-t-[#1d3a6b] bg-[#4478bd]" />
    </div>
  );
}
